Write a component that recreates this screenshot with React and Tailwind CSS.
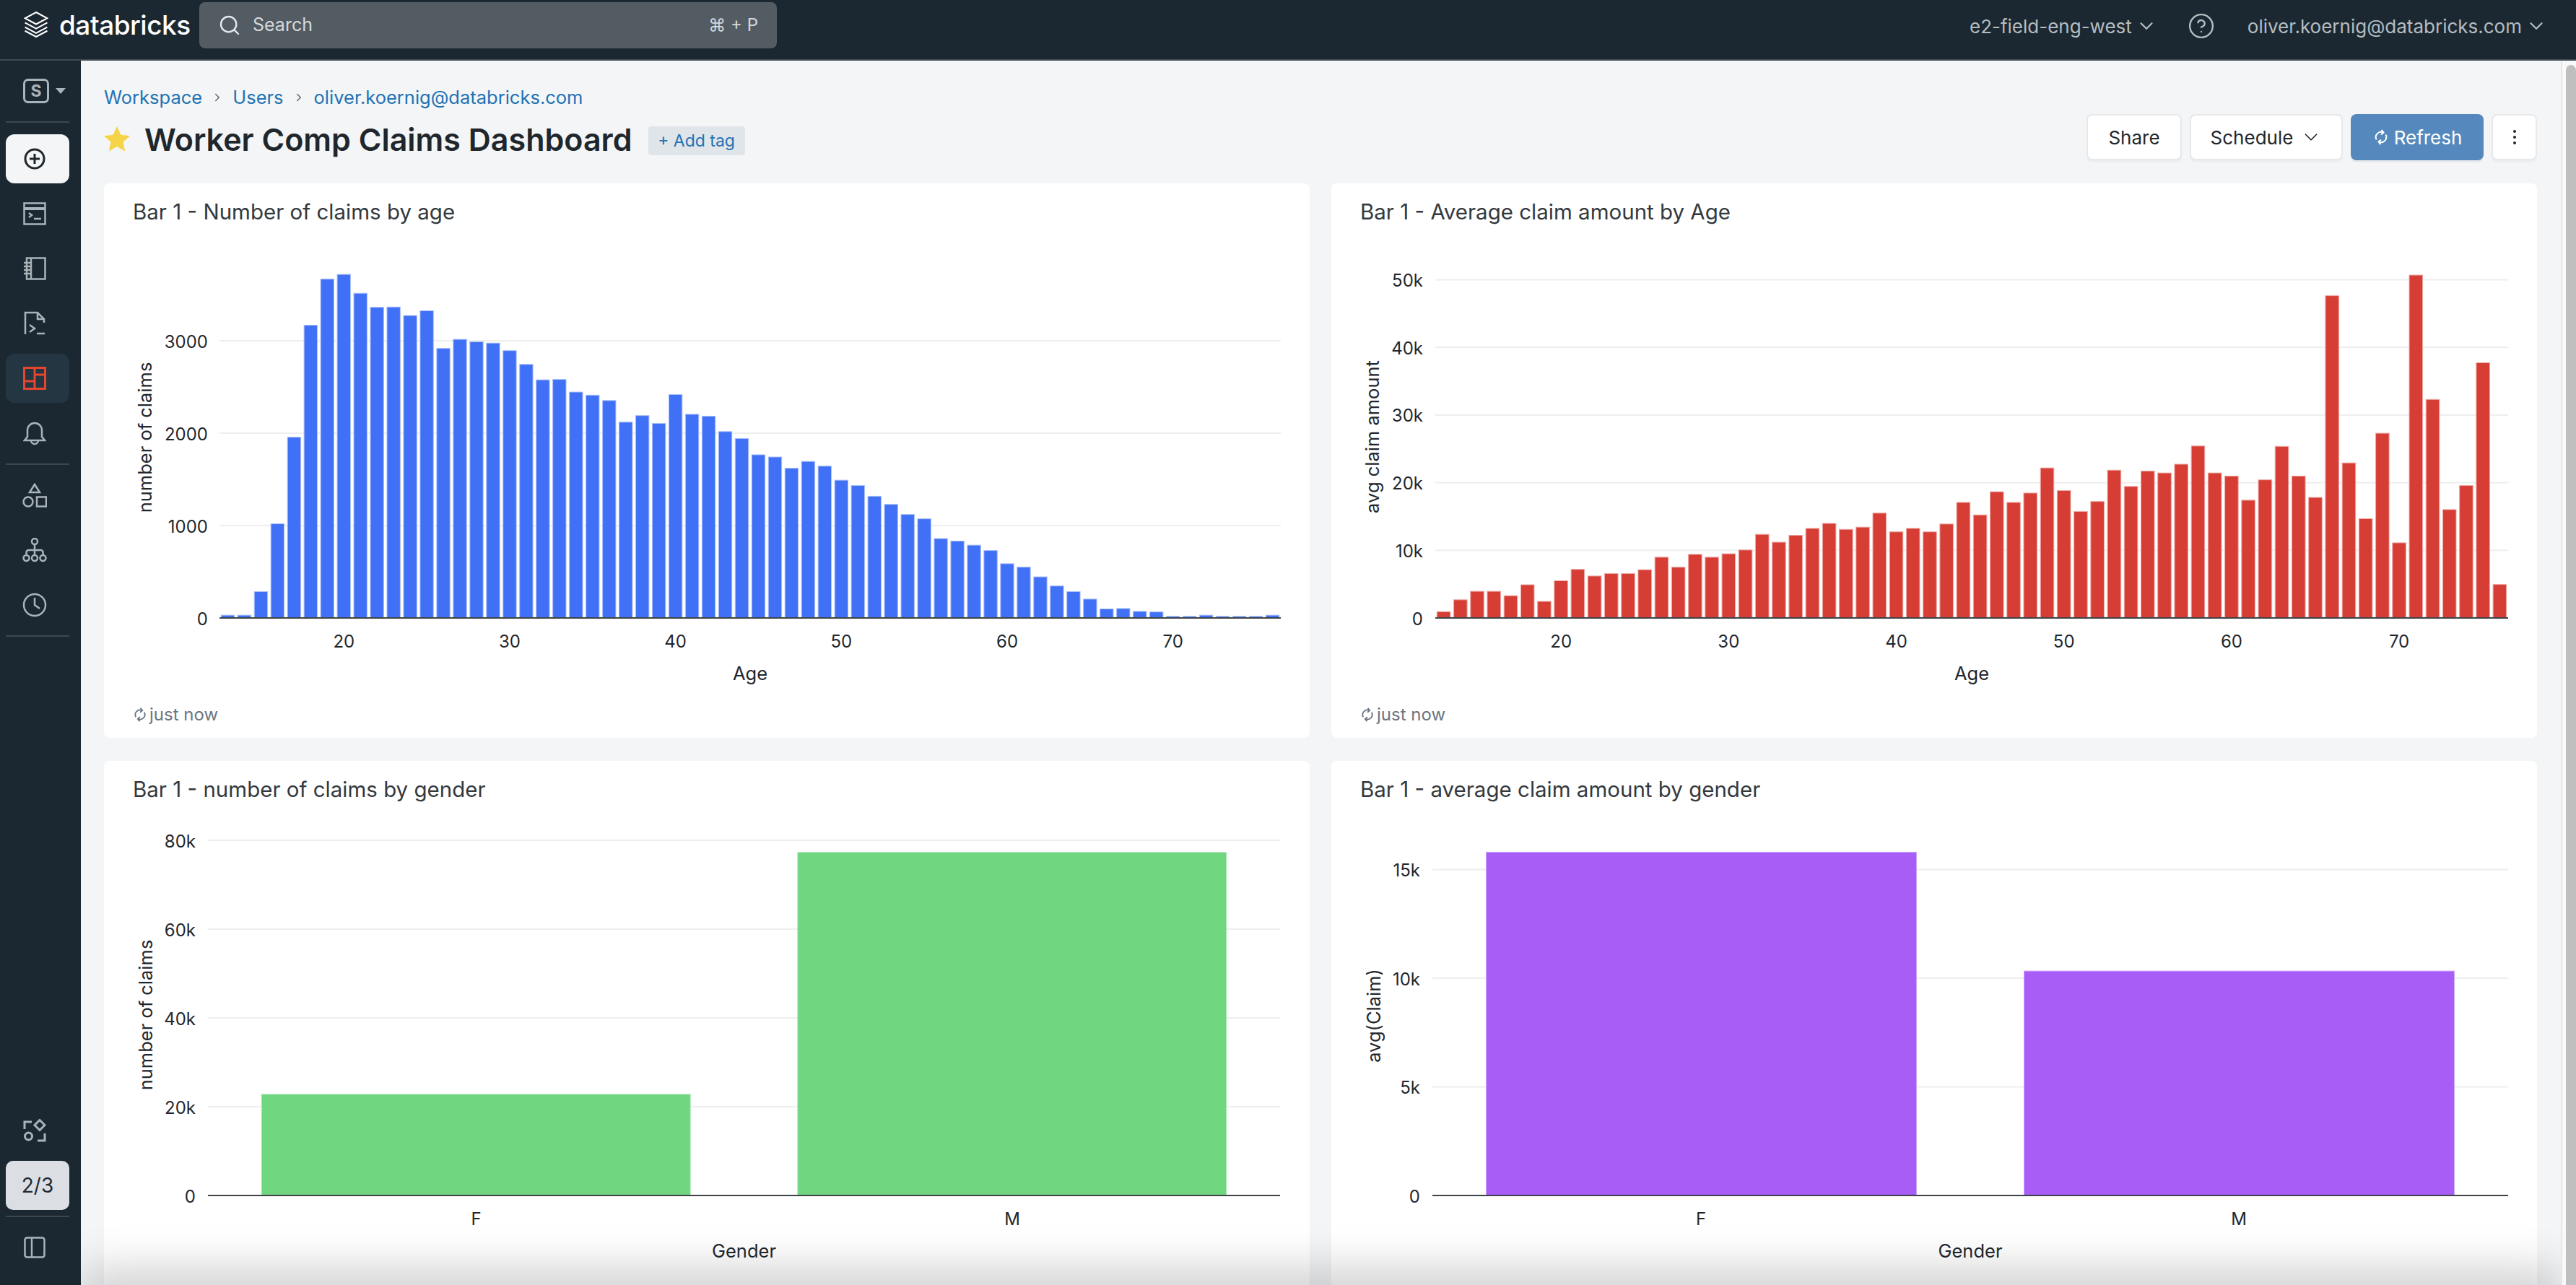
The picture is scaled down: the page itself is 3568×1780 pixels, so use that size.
import React from 'react';
import { ChevronDown, ChevronRight, CircleHelp, Search } from 'lucide-react';

const ageClaims = [30, 30, 285, 1019, 1956, 3168, 3667, 3718, 3514, 3362, 3365, 3273, 3324, 2917, 3015, 2988, 2975, 2893, 2744, 2577, 2581, 2445, 2411, 2353, 2119, 2190, 2105, 2418, 2204, 2183, 2017, 1942, 1766, 1742, 1620, 1694, 1643, 1491, 1433, 1317, 1229, 1120, 1073, 859, 832, 788, 730, 587, 550, 445, 346, 285, 204, 98, 102, 71, 65, 17, 17, 30, 17, 17, 17, 30];
const ageAvg = [0.93, 2.69, 3.94, 3.94, 3.29, 4.91, 2.45, 5.5, 7.18, 6.2, 6.57, 6.57, 7.13, 8.98, 7.5, 9.4, 8.98, 9.49, 10.05, 12.36, 11.2, 12.22, 13.24, 13.98, 13.1, 13.43, 15.5, 12.73, 13.24, 12.73, 13.89, 17.08, 15.23, 18.66, 17.08, 18.47, 22.18, 18.84, 15.74, 17.22, 21.85, 19.44, 21.71, 21.44, 22.73, 25.42, 21.44, 20.97, 17.41, 20.42, 25.37, 20.97, 17.82, 47.64, 22.92, 14.68, 27.31, 11.11, 50.69, 32.31, 16.02, 19.58, 37.73, 4.95];

function Sync({ className }) {
  return (
    <svg viewBox="0 0 24 24" fill="none" stroke="currentColor" strokeWidth="2" className={className}>
      <path d="M5.6 15.5A7.2 7.2 0 0 1 15 5.6" />
      <path d="M12.5 2l3 3.6-3.5 2.9" />
      <path d="M18.4 8.5A7.2 7.2 0 0 1 9 18.4" />
      <path d="M11.5 22l-3-3.6 3.5-2.9" />
    </svg>
  );
}

function Logo() {
  return (
    <svg viewBox="0 0 32 35" fill="none" stroke="#fff" strokeWidth="2" className="w-[34px] h-[36px]">
      <path d="M16 1l15 8-15 8L1 9z" />
      <path d="M1 15l15 8 15-8" />
      <path d="M1 21l15 8 15-8" />
      <path d="M1 26l15 8 15-8" />
    </svg>
  );
}

const icons = {
  plus: (
    <svg viewBox="0 0 30 30" fill="none" stroke="#1f272d" strokeWidth="3" className="w-[30px] h-[30px]">
      <circle cx="15" cy="15" r="13" />
      <path d="M15 8v14M8 15h14" />
    </svg>
  ),
  terminal: (
    <svg viewBox="0 0 32 32" fill="none" stroke="currentColor" strokeWidth="2.5" className="w-[32px] h-[32px]">
      <rect x="1.5" y="1.5" width="29" height="29" />
      <path d="M1.5 9h29" strokeWidth="4" />
      <path d="M8 15l4 3-4 3" />
      <path d="M15 23h10" />
    </svg>
  ),
  notebook: (
    <svg viewBox="0 0 32 32" fill="none" stroke="currentColor" strokeWidth="2.5" className="w-[32px] h-[32px]">
      <path d="M5 1.5h25.5v29H5z" />
      <path d="M11 1.5v29" />
      <path d="M1 8h9M1 13h9M1 18h9M1 23h9" />
    </svg>
  ),
  query: (
    <svg viewBox="0 0 32 34" fill="none" stroke="currentColor" strokeWidth="2.5" className="w-[32px] h-[34px]">
      <path d="M3 32V2h17l9 9v5" />
      <path d="M20 2v9h9" />
      <path d="M9 19l7 5-7 5" />
      <path d="M19 31h11" />
    </svg>
  ),
  dashboard: (
    <svg viewBox="0 0 32 32" fill="none" stroke="#e8452e" strokeWidth="3" className="w-[32px] h-[32px]">
      <rect x="1.5" y="1.5" width="29" height="29" />
      <path d="M16 1.5v29M1.5 20h14.5M16 11h14.5" />
    </svg>
  ),
  bell: (
    <svg viewBox="0 0 32 34" fill="none" stroke="currentColor" strokeWidth="2.5" className="w-[32px] h-[34px]">
      <path d="M6 22V13a10 10 0 0 1 20 0v9l4 5H2z" />
      <path d="M11 27a5 5 0 0 0 10 0" />
    </svg>
  ),
  shapes: (
    <svg viewBox="0 0 34 34" fill="none" stroke="currentColor" strokeWidth="2.5" className="w-[34px] h-[34px]">
      <path d="M17 2l7 11H10z" />
      <circle cx="8" cy="26" r="6.5" />
      <rect x="20" y="19.5" width="13" height="13" />
    </svg>
  ),
  org: (
    <svg viewBox="0 0 34 34" fill="none" stroke="currentColor" strokeWidth="2.5" className="w-[34px] h-[34px]">
      <circle cx="17" cy="5" r="4" />
      <circle cx="5.5" cy="28" r="4" />
      <circle cx="17" cy="28" r="4" />
      <circle cx="28.5" cy="28" r="4" />
      <path d="M17 9v15M5.5 24v-4a3 3 0 0 1 3-3h17a3 3 0 0 1 3 3v4" />
    </svg>
  ),
  clock: (
    <svg viewBox="0 0 34 34" fill="none" stroke="currentColor" strokeWidth="2.5" className="w-[34px] h-[34px]">
      <circle cx="17" cy="17" r="15" />
      <path d="M17 7v10l7 5" />
    </svg>
  ),
  assets: (
    <svg viewBox="0 0 32 32" fill="none" stroke="currentColor" strokeWidth="3" className="w-[32px] h-[32px]">
      <path d="M12 4H2v10M20 30h10V20" />
      <circle cx="7.5" cy="24" r="5" />
      <path d="M23 1.5l7 7-7 7-7-7z" />
    </svg>
  ),
  panel: (
    <svg viewBox="0 0 30 30" fill="none" stroke="currentColor" strokeWidth="2.5" className="w-[30px] h-[30px]">
      <rect x="1.5" y="1.5" width="27" height="27" rx="3" />
      <path d="M11 1.5v27" />
    </svg>
  ),
};

function NavItem({ icon, className = '' }) {
  return <div className={`h-[68px] rounded-[12px] flex items-center justify-center pr-[8px] ${className}`}>{icons[icon]}</div>;
}

function Divider() {
  return <div className="h-[2px] bg-[#3a4951]" />;
}

function Sidebar() {
  return (
    <aside className="w-[112px] shrink-0 bg-[#1b2831] pl-[8px] pr-[16px] flex flex-col text-[#aab3b9] pb-[18px] overflow-hidden">
      <div className="h-[84px] shrink-0 flex items-center gap-[9px] pl-[24px]">
        <div className="w-[36px] h-[34px] border-[3px] border-[#aab3b9] rounded-[7px] flex items-center justify-center text-[23px] font-bold leading-none">S</div>
        <div className="w-0 h-0 border-x-[7px] border-x-transparent border-t-[8px] border-t-[#aab3b9]" />
      </div>
      <Divider />
      <div className="flex flex-col gap-[8px] mt-[16px]">
        <NavItem icon="plus" className="bg-[#f3f5f6]" />
        <NavItem icon="terminal" />
        <NavItem icon="notebook" />
        <NavItem icon="query" />
        <NavItem icon="dashboard" className="bg-[#243642]" />
        <NavItem icon="bell" />
      </div>
      <div className="mt-[8px]"><Divider /></div>
      <div className="flex flex-col gap-[8px] mt-[8px]">
        <NavItem icon="shapes" />
        <NavItem icon="org" />
        <NavItem icon="clock" />
      </div>
      <div className="mt-[8px]"><Divider /></div>
      <div className="mt-auto flex flex-col gap-[8px]">
        <NavItem icon="assets" />
        <div className="h-[68px] rounded-[10px] bg-[#dbdfe3] text-[#1f2a33] text-[28px] flex items-center justify-center">2/3</div>
        <Divider />
        <NavItem icon="panel" />
      </div>
    </aside>
  );
}

function Header() {
  return (
    <header className="h-[84px] shrink-0 bg-[#1b2831] border-b-[2px] border-[#3f4b53] flex items-start text-[#b5bcc1]">
      <div className="flex items-center h-[68px] pl-[33px] w-[276px] shrink-0">
        <Logo />
        <span className="ml-[15px] text-white text-[37px] font-medium leading-none tracking-[-0.5px]">databricks</span>
      </div>
      <div className="mt-[3px] w-[800px] h-[64px] rounded-[8px] bg-[#535c63] flex items-center pl-[26px] pr-[26px] text-[#d5d9dc] text-[25px]">
        <Search className="w-[32px] h-[32px] text-[#e4e7e9]" strokeWidth={1.8} />
        <span className="ml-[16px]">Search</span>
        <span className="ml-auto text-[24px]">⌘ + P</span>
      </div>
      <div className="ml-auto flex items-center h-[72px] pr-[40px] text-[26px]">
        <span>e2-field-eng-west</span>
        <ChevronDown className="ml-[5px] w-[30px] h-[30px]" strokeWidth={1.8} />
        <CircleHelp className="ml-[42px] w-[38px] h-[38px]" strokeWidth={1.5} />
        <span className="ml-[45px]">oliver.koernig@databricks.com</span>
        <ChevronDown className="ml-[5px] w-[30px] h-[30px]" strokeWidth={1.8} />
      </div>
    </header>
  );
}

function PageHead() {
  const btn = 'h-[64px] rounded-[8px] bg-white border-[2px] border-[#e6e8ea] shadow-[0_3px_0_#eceef0] flex items-center justify-center text-[26px] text-[#1f272d]';
  return (
    <div className="pt-[33px] pb-[32px]">
      <div className="h-[36px] flex items-center text-[25.5px] text-[#2272b4]">
        <span>Workspace</span>
        <ChevronRight className="mx-[12px] w-[18px] h-[18px] text-[#5f6b74]" />
        <span>Users</span>
        <ChevronRight className="mx-[12px] w-[18px] h-[18px] text-[#5f6b74]" />
        <span>oliver.koernig@databricks.com</span>
      </div>
      <div className="mt-[5px] h-[64px] flex items-center">
        <svg viewBox="0 0 36 35" className="w-[36px] h-[35px] mt-[4px]">
          <path d="M18 0l5.3 11.8 12.7 1.4-9.5 8.6 2.7 12.7L18 28.100l-11.200 6.400 2.700-12.700L0 13.200l12.700-1.400z" fill="#f5d547" />
        </svg>
        <h1 className="ml-[20px] mt-[6px] text-[43px] leading-none font-semibold text-[#1f272d]">Worker Comp Claims Dashboard</h1>
        <div className="ml-[22px] mt-[10px] h-[40px] w-[134px] rounded-[4px] bg-[#e0e5e9] flex items-center justify-center text-[23px] text-[#2272b4]">+ Add tag</div>
        <div className="ml-auto flex items-center gap-[11px]">
          <div className={`${btn} w-[132px]`}>Share</div>
          <div className={`${btn} w-[212px] gap-[10px]`}>
            Schedule
            <ChevronDown className="w-[30px] h-[30px]" strokeWidth={1.4} />
          </div>
          <div className="h-[64px] w-[184px] rounded-[8px] bg-[#5589bd] shadow-[0_3px_0_#e6e8ea] flex items-center justify-center gap-[6px] text-[26px] text-white">
            <Sync className="w-[24px] h-[24px]" />
            Refresh
          </div>
          <div className={`${btn} w-[63px] flex-col gap-[4px]`}>
            <span className="w-[4px] h-[4px] rounded-full bg-[#1f272d]" />
            <span className="w-[4px] h-[4px] rounded-full bg-[#1f272d]" />
            <span className="w-[4px] h-[4px] rounded-full bg-[#1f272d]" />
          </div>
        </div>
      </div>
    </div>
  );
}

// chart coordinates are page pixels, the viewBox moves them into the card
function BarChart({ box, left, right, base, unit, ticks, bars, color, edge, xTicks, xLabel, yLabel, yLabelX, yLabelY, tickX, xTickY, xLabelY }) {
  const band = (right - left) / bars.length;
  return (
    <svg viewBox={`${box[0]} ${box[1]} 1670 628`} className="block w-[1670px] h-[628px] text-[24px] fill-[#1f272d]">
      {ticks.filter(t => t.v > 0).map(t => (
        <rect key={t.v} x={left} y={base - t.v * unit - 1} width={right - left} height="2" fill="#eeeeee" />
      ))}
      {bars.map((b, i) => {
        const h = b.v * unit;
        return <rect key={i} x={left + band * (i + 0.1)} y={base - h} width={band * 0.8} height={h} fill={color} stroke={edge} strokeWidth="1" />;
      })}
      <rect x={left} y={base - 1} width={right - left} height="2" fill="#3f4347" />
      {ticks.map(t => (
        <text key={t.v} x={tickX} y={base - t.v * unit + 1} textAnchor="end" dominantBaseline="central">{t.label}</text>
      ))}
      {xTicks.map(t => (
        <text key={t.label} x={t.x} y={xTickY} textAnchor="middle" dominantBaseline="central">{t.label}</text>
      ))}
      <text x={(left + right) / 2} y={xLabelY} textAnchor="middle" dominantBaseline="central" className="text-[25.5px]">{xLabel}</text>
      <text transform={`translate(${yLabelX} ${yLabelY}) rotate(-90)`} textAnchor="middle" dominantBaseline="central" className="text-[25.5px]">{yLabel}</text>
    </svg>
  );
}

function Card({ title, children }) {
  return (
    <div className="bg-white rounded-[8px] h-[768px] flex flex-col">
      <div className="h-[72px] shrink-0 pl-[40px] pt-[21px] text-[29.5px] leading-[36px] text-[#33393e]">{title}</div>
      {children}
      <div className="pl-[39px] mt-[20px] h-[32px] flex items-center gap-[2px] text-[24px] text-[#6b7580]">
        <Sync className="w-[22px] h-[22px]" />
        just now
      </div>
    </div>
  );
}

function decades(left, band) {
  return [20, 30, 40, 50, 60, 70].map(a => ({ label: String(a), x: left + (a - 13 + 0.5) * band }));
}

function Dashboard() {
  return (
    <div className="grid grid-cols-2 gap-x-[30px] gap-y-[32px]">
      <Card title="Bar 1 - Number of claims by age">
        <BarChart box={[144, 326]} left={304} right={1774} base={856} unit={0.128} color="#4070f6" edge="#a9bffa"
          ticks={[0, 1000, 2000, 3000].map(v => ({ v, label: String(v) }))}
          bars={ageClaims.map(v => ({ v }))} xTicks={decades(304, 1470 / 64)} xLabel="Age"
          yLabel="number of claims" yLabelX={200} yLabelY={606} tickX={288} xTickY={888} xLabelY={932} />
      </Card>
      <Card title="Bar 1 - Average claim amount by Age">
        <BarChart box={[1844, 326]} left={1988} right={3474} base={856} unit={9.37} color="#d63e35" edge="#eea9a4"
          ticks={[0, 10, 20, 30, 40, 50].map(v => ({ v, label: v ? `${v}k` : '0' }))}
          bars={ageAvg.map(v => ({ v }))} xTicks={decades(1988, 1486 / 64)} xLabel="Age"
          yLabel="avg claim amount" yLabelX={1900} yLabelY={605} tickX={1971} xTickY={888} xLabelY={932} />
      </Card>
      <Card title="Bar 1 - number of claims by gender">
        <BarChart box={[144, 1126]} left={288} right={1773} base={1656} unit={6.15} color="#70d680" edge="#b4e8bc"
          ticks={[0, 20, 40, 60, 80].map(v => ({ v, label: v ? `${v}k` : '0' }))}
          bars={[{ v: 22.8 }, { v: 77.3 }]} xTicks={[{ label: 'F', x: 659.5 }, { label: 'M', x: 1402 }]} xLabel="Gender"
          yLabel="number of claims" yLabelX={201} yLabelY={1406} tickX={271} xTickY={1688} xLabelY={1732} />
      </Card>
      <Card title="Bar 1 - average claim amount by gender">
        <BarChart box={[1844, 1126]} left={1984} right={3474} base={1656} unit={30.1} color="#a85df7" edge="#cda6fa"
          ticks={[0, 5, 10, 15].map(v => ({ v, label: v ? `${v}k` : '0' }))}
          bars={[{ v: 15.8 }, { v: 10.33 }]} xTicks={[{ label: 'F', x: 2356 }, { label: 'M', x: 3101 }]} xLabel="Gender"
          yLabel="avg(Claim)" yLabelX={1902} yLabelY={1407} tickX={1967} xTickY={1688} xLabelY={1732} />
      </Card>
    </div>
  );
}

export default function App() {
  return (
    <div className="h-screen w-full overflow-hidden flex flex-col bg-[#f3f5f6] font-[Inter,sans-serif] text-[#1f272d]">
      <Header />
      <div className="flex-1 min-h-0 flex">
        <Sidebar />
        <main className="relative flex-1 min-w-0 overflow-hidden pl-[32px] pr-[33px]">
          <PageHead />
          <Dashboard />
          <div className="absolute left-[24px] right-[24px] -bottom-[40px] h-[40px] shadow-[0_0_60px_24px_rgba(0,0,0,0.18)]" />
        </main>
        <div className="w-[21px] shrink-0 border-l-[2px] border-[#e3e5e7] bg-[#f8f9fa] flex flex-col items-end pt-[6px]">
          <div className="w-[14px] flex-1 rounded-t-[7px] bg-[#bfbfbf]" />
        </div>
      </div>
    </div>
  );
}
